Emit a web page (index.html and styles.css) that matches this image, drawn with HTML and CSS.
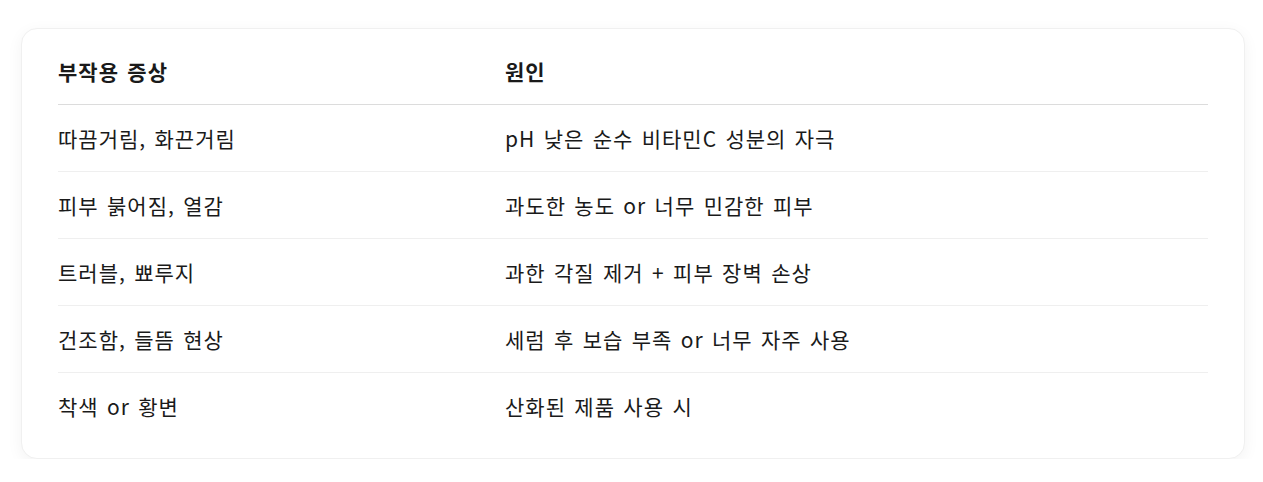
FILE: index.html
```html
<!DOCTYPE html>
<html lang="ko">
<head>
<meta charset="utf-8">
<link rel="stylesheet" href="styles.css">
</head>
<body>
<div class="card">
  <table class="tbl">
    <thead>
      <tr><th class="c1">부작용 증상</th><th>원인</th></tr>
    </thead>
    <tbody>
      <tr><td class="c1">따끔거림, 화끈거림</td><td>pH 낮은 순수 비타민C 성분의 자극</td></tr>
      <tr><td class="c1">피부 붉어짐, 열감</td><td>과도한 농도 or 너무 민감한 피부</td></tr>
      <tr><td class="c1">트러블, 뾰루지</td><td>과한 각질 제거 + 피부 장벽 손상</td></tr>
      <tr><td class="c1">건조함, 들뜸 현상</td><td>세럼 후 보습 부족 or 너무 자주 사용</td></tr>
      <tr class="last"><td class="c1">착색 or 황변</td><td>산화된 제품 사용 시</td></tr>
    </tbody>
  </table>
</div>
</body>
</html>
```
FILE: styles.css
```css
html, body { margin: 0; padding: 0; background: #fff; }
body {
  padding: 28px 18px 0 21px;
  font-family: "Noto Sans CJK KR", "Noto Sans", sans-serif;
  color: #1a1a1a;
}
.card {
  width: 1224px;
  box-sizing: border-box;
  border: 1px solid #f0f0f0;
  border-radius: 16px;
  box-shadow: 0 4px 16px rgba(0,0,0,0.05);
  padding: 20px 36px 19px 36px;
  background: #fff;
}
.tbl {
  width: 100%;
  border-collapse: collapse;
  font-size: 21px;
  letter-spacing: 1px;
  word-spacing: 1.5px;
}
.tbl th, .tbl td {
  text-align: left;
  padding: 0;
  vertical-align: middle;
}
.tbl th {
  font-weight: 700;
  height: 43px;
  padding-bottom: 12px;
  border-bottom: 1px solid #dcdcdc;
}
.tbl td {
  font-weight: 400;
  height: 66px;
  border-bottom: 1px solid #efefef;
}
.tbl tr.last td { border-bottom: none; }
.c1 { width: 447px; }
```
